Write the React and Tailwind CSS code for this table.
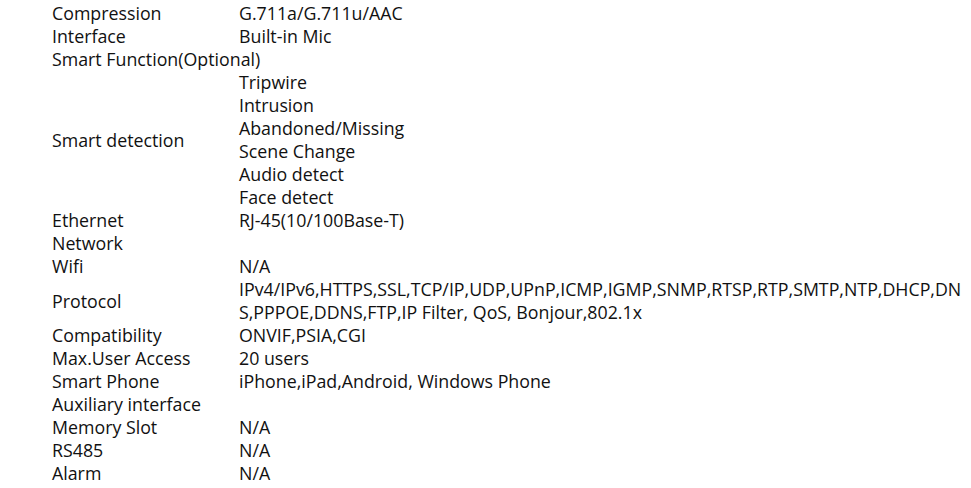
import React from 'react';

const rows = [
  { label: 'Compression', value: ['G.711a/G.711u/AAC'] },
  { label: 'Interface', value: ['Built-in Mic'] },
  { label: 'Smart Function(Optional)', value: [] },
  {
    label: 'Smart detection',
    value: ['Tripwire', 'Intrusion', 'Abandoned/Missing', 'Scene Change', 'Audio detect', 'Face detect'],
  },
  { label: 'Ethernet', value: ['RJ-45(10/100Base-T)'] },
  { label: 'Network', value: [] },
  { label: 'Wifi', value: ['N/A'] },
  {
    label: 'Protocol',
    value: [
      'IPv4/IPv6,HTTPS,SSL,TCP/IP,UDP,UPnP,ICMP,IGMP,SNMP,RTSP,RTP,SMTP,NTP,DHCP,DN',
      'S,PPPOE,DDNS,FTP,IP Filter, QoS, Bonjour,802.1x',
    ],
  },
  { label: 'Compatibility', value: ['ONVIF,PSIA,CGI'] },
  { label: 'Max.User Access', value: ['20 users'] },
  { label: 'Smart Phone', value: ['iPhone,iPad,Android, Windows Phone'] },
  { label: 'Auxiliary interface', value: [] },
  { label: 'Memory Slot', value: ['N/A'] },
  { label: 'RS485', value: ['N/A'] },
  { label: 'Alarm', value: ['N/A'] },
];

export default function App() {
  return (
    <div className="h-[488px] w-[971px] overflow-hidden bg-white pl-[52px] pt-[2px] font-['Open_Sans',sans-serif] text-[17.8px] leading-[23px] text-[#111]">
      {rows.map((row) => (
        <div key={row.label} className="flex items-center">
          <div className="w-[187px] shrink-0 whitespace-nowrap">{row.label}</div>
          <div className="flex flex-col whitespace-nowrap">
            {row.value.map((line) => (
              <span key={line}>{line}</span>
            ))}
          </div>
          {row.value.length === 0 && <div className="h-[23px]" />}
        </div>
      ))}
    </div>
  );
}
